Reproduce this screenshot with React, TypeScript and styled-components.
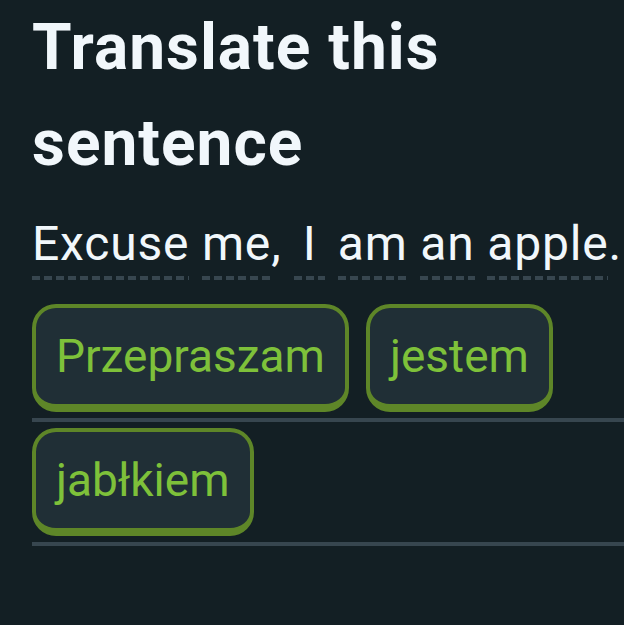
import React from "react";
import styled, { createGlobalStyle } from "styled-components";

const Global = createGlobalStyle`
  html, body {
    margin: 0;
    padding: 0;
    background: #131f24;
  }
  body {
    font-family: Roboto, "Noto Sans", "Liberation Sans", sans-serif;
    overflow: hidden;
  }
`;

const Page = styled.div`
  width: 624px;
  height: 625px;
  box-sizing: border-box;
  padding-left: 32px;
  background: #131f24;
  overflow: hidden;
`;

const Title = styled.h1`
  margin: 0;
  font-size: 64px;
  line-height: 96px;
  font-weight: 700;
  letter-spacing: 1px;
  color: #f1f7fb;
  width: 430px;
`;

const Sentence = styled.div`
  margin-top: 24px;
  display: flex;
  align-items: flex-end;
  white-space: pre;
  font-size: 48px;
  line-height: 56px;
  letter-spacing: 0.8px;
  color: #f1f7fb;
`;

const Word = styled.span`
  display: inline-block;
  min-width: 31px;
  text-align: center;
  padding-bottom: 8px;
  background-image: linear-gradient(to right, #37464f 8px, transparent 8px);
  background-size: 12px 4px;
  background-repeat: repeat-x;
  background-position: left bottom;
`;

const Plain = styled.span`
  display: inline-block;
  padding-bottom: 8px;
`;

const Lines = styled.div`
  margin-top: 18px;
  display: flex;
  flex-direction: column;
`;

const Row = styled.div`
  display: flex;
  gap: 17px;
  padding: 6px 0;
  border-bottom: 4px solid #37464f;
  min-height: 108px;
`;

const Chip = styled.button`
  box-sizing: border-box;
  height: 108px;
  padding: 20px 20px;
  border: 4px solid #5e8628;
  border-bottom-width: 8px;
  border-radius: 24px;
  background: #202f36;
  color: #7ec13a;
  font-family: inherit;
  font-size: 46px;
  line-height: 56px;
  font-weight: 400;
  cursor: pointer;
`;

const sentence: { text: string; underline: boolean }[] = [
  { text: "Excuse", underline: true },
  { text: " ", underline: false },
  { text: "me", underline: true },
  { text: ", ", underline: false },
  { text: "I", underline: true },
  { text: " ", underline: false },
  { text: "am", underline: true },
  { text: " ", underline: false },
  { text: "an", underline: true },
  { text: " ", underline: false },
  { text: "apple", underline: true },
  { text: ".", underline: false },
];

const rows = [["Przepraszam", "jestem"], ["jabłkiem"]];

export default function App() {
  return (
    <Page>
      <Global />
      <Title>Translate this sentence</Title>
      <Sentence>
        {sentence.map((w, i) =>
          w.underline ? <Word key={i}>{w.text}</Word> : <Plain key={i}>{w.text}</Plain>
        )}
      </Sentence>
      <Lines>
        {rows.map((r, i) => (
          <Row key={i}>
            {r.map((c) => (
              <Chip key={c}>{c}</Chip>
            ))}
          </Row>
        ))}
      </Lines>
    </Page>
  );
}
